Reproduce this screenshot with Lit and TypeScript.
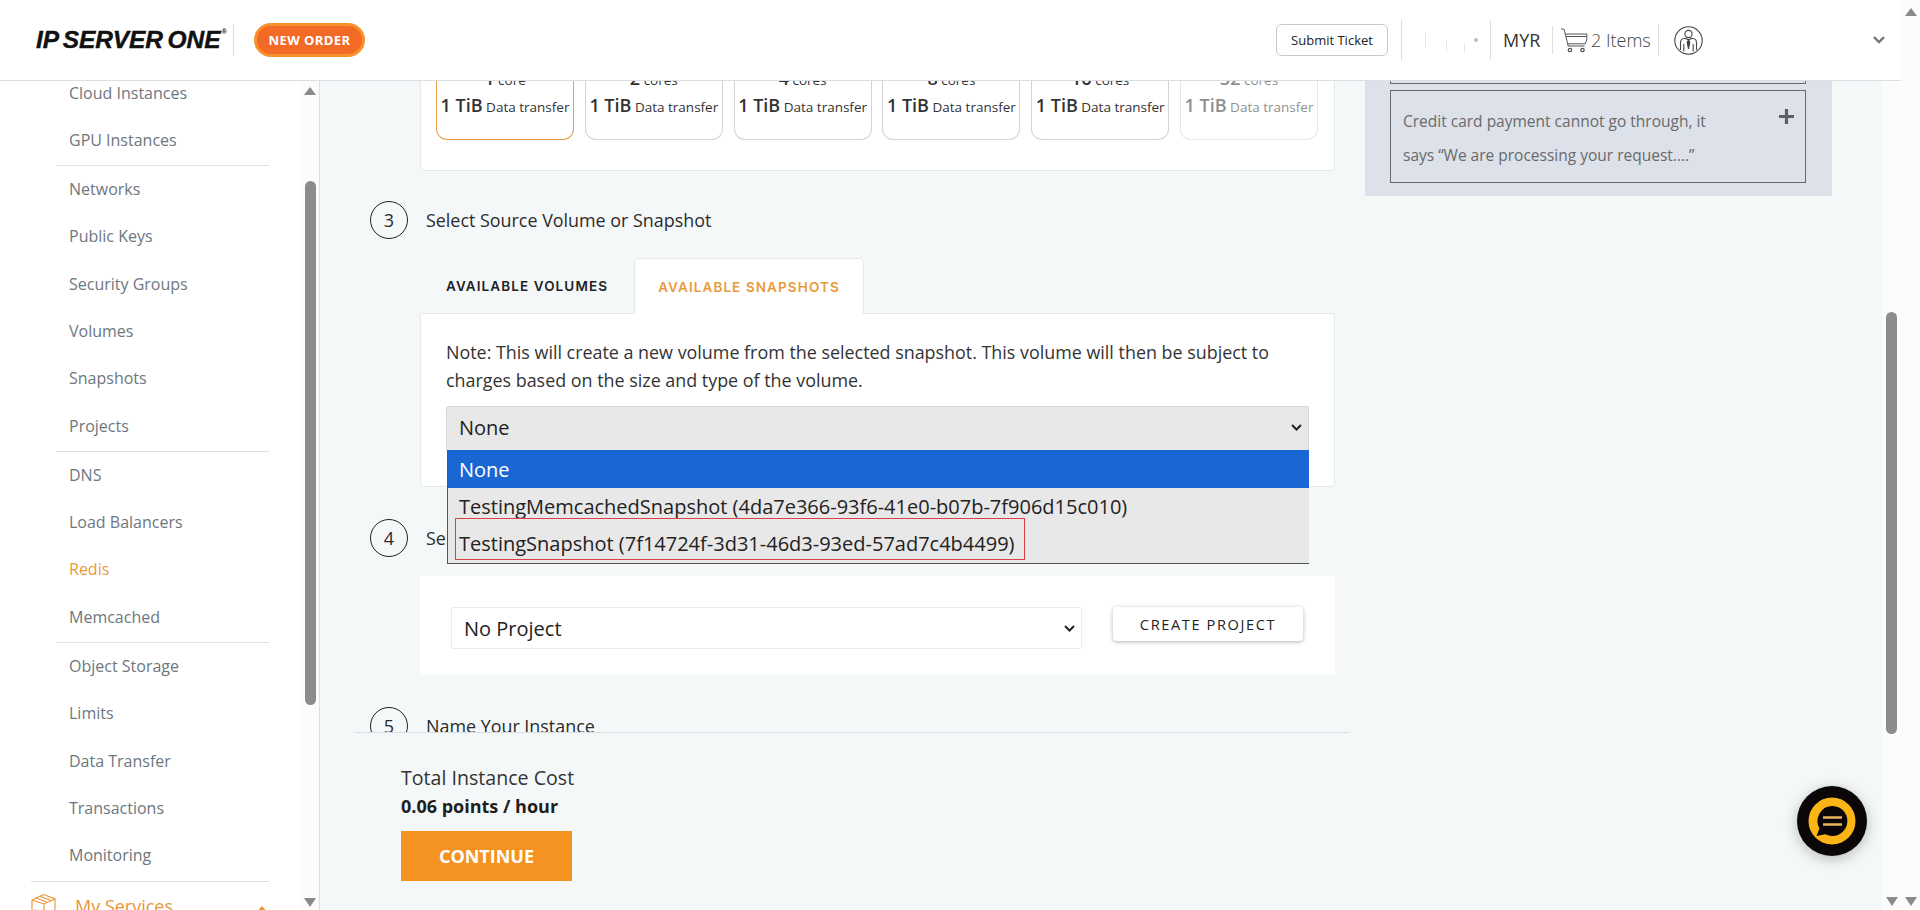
import { LitElement, html, css, svg } from "lit";
import { customElement } from "lit/decorators.js";

const groups = [
  ["Cloud Instances", "GPU Instances"],
  ["Networks", "Public Keys", "Security Groups", "Volumes", "Snapshots", "Projects"],
  ["DNS", "Load Balancers", "Redis", "Memcached"],
  ["Object Storage", "Limits", "Data Transfer", "Transactions", "Monitoring"],
];

const cores = [
  ["1", "core"],
  ["2", "cores"],
  ["4", "cores"],
  ["8", "cores"],
  ["16", "cores"],
  ["32", "cores"],
];

const chevron = svg`<svg class="chev" width="11" height="7" viewBox="0 0 11 7"><path d="M1 1l4.5 4.5L10 1" fill="none" stroke="#222" stroke-width="2"/></svg>`;

@customElement("app-root")
export class AppRoot extends LitElement {
  static styles = css`
    :host {
      display: flex;
      width: 1920px;
      height: 910px;
      overflow: hidden;
      font-family: "Open Sans", "Liberation Sans", sans-serif;
      color: #222;
      background: #fdfdfd;
      position: relative;
    }
    * { box-sizing: border-box; }
    .page { width: 1901px; display: flex; flex-direction: column; height: 910px; }
    .sb { display: flex; flex-direction: column; align-items: center; background: #fcfcfc; flex: none; }
    .outer { width: 19px; padding: 8px 0 4px; }
    .arrow-up { width: 0; height: 0; border-left: 6px solid transparent; border-right: 6px solid transparent; border-bottom: 8px solid #8a8a8a; }
    .arrow-down { width: 0; height: 0; border-left: 6px solid transparent; border-right: 6px solid transparent; border-top: 9px solid #8a8a8a; margin-top: auto; }
    .thumb { width: 11px; background: #8c8c8c; border-radius: 6px; }

    header { height: 81px; flex: none; background: #fff; border-bottom: 1px solid #dcdfe1; display: flex; align-items: center; position: relative; z-index: 5; }
    .logo { margin-left: 36px; width: 186px; font: italic 700 24.5px "Liberation Sans", sans-serif; color: #111; white-space: nowrap; letter-spacing: -0.1px; word-spacing: -2px; display: flex; line-height: 1; -webkit-text-stroke: 0.4px #111; }
    .logo sup { font-size: 7px; line-height: 1; -webkit-text-stroke: 0; margin-left: 1px; }
    .vsep { width: 1px; background: #dedede; flex: none; }
    .logo-sep { height: 32px; margin-left: 11px; }
    .order { margin-left: 20px; width: 111px; height: 34px; border-radius: 17px; background: #f26a25; border: 3px solid #f7902f; color: #fff; font-size: 13px; font-weight: 700; letter-spacing: 0.4px; display: flex; align-items: center; justify-content: center; }
    .ticket { margin-left: auto; width: 112px; height: 32px; border: 1px solid #c8c8c8; border-radius: 6px; font-size: 13px; display: flex; align-items: center; justify-content: center; color: #222; }
    .sep-a { height: 40px; margin-left: 13px; }
    .blur { width: 88px; height: 40px; display: flex; align-items: center; flex: none; }
    .blur i { display: block; background: #e6e6e6; flex: none; }
    .blur i:nth-child(1) { width: 1px; height: 14px; margin-left: 23px; }
    .blur i:nth-child(2) { width: 1px; height: 10px; margin-left: 20px; margin-top: 12px; }
    .blur i:nth-child(3) { width: 1px; height: 8px; margin-left: 17px; margin-top: 16px; }
    .blur i:nth-child(4) { width: 4px; height: 4px; margin-left: 9px; background: #b9bec6; border-radius: 50%; }
    .sep-z { height: 40px; }
    .myr { font-size: 18px; margin-left: 12px; width: 49px; font-weight: 400; color: #333; }
    .sep-b { height: 28px; }
    .cart { margin-left: 7px; flex: none; display: block; }
    .items { margin-left: 3px; font-size: 18px; font-weight: 300; color: #444; width: 67px; white-space: nowrap; }
    .sep-c { height: 32px; }
    .user { margin-left: 15px; flex: none; display: block; }
    .caret { margin-left: 170px; margin-right: 16px; flex: none; display: block; }

    .body { flex: 1; display: flex; min-height: 0; }
    aside { width: 320px; flex: none; border-right: 1px solid #dcdfe1; display: flex; background: #fff; }
    .nav { flex: 1; overflow: hidden; min-width: 0; }
    .navin { margin-top: -11.5px; }
    .group { margin-left: 56px; width: 213px; border-bottom: 1px solid #dee1e4; padding-bottom: 1px; }
    .group:nth-child(4) { border-bottom: none; }
    .row { height: 47.3px; line-height: 47.3px; padding-left: 13px; font-size: 16px; color: #6d7780; white-space: nowrap; }
    .row.on { color: #e89a3c; }
    .wide-line { margin-left: 31px; width: 238px; height: 1px; background: #dee1e4; }
    .services { display: flex; align-items: center; margin-left: 31px; height: 48px; width: 238px; color: #e8953a; font-size: 18px; }
    .services span { margin-left: 19px; }
    .services .up { margin-left: auto; margin-right: 2px; margin-top: 6px; width: 0; height: 0; border-left: 5px solid transparent; border-right: 5px solid transparent; border-bottom: 6px solid #e8953a; }
    .side-sb { width: 18px; padding: 6px 0 3px; }
    .side-sb .thumb { height: 524px; margin-top: 86px; }

    main { flex: 1; min-width: 0; background: #f5f8f9; display: flex; }
    .center { width: 1029px; padding-left: 35px; display: flex; flex-direction: column; flex: none; }
    .scroll { height: 651px; overflow: hidden; flex: none; padding-left: 65px; padding-right: 14px; }
    .card { background: #fff; border: 1px solid #e6e9ea; border-radius: 5px; }
    .core-card { margin-top: -23px; height: 113px; padding-left: 15px; display: flex; gap: 10.8px; }
    .core { width: 138px; height: 81px; border: 1px solid #d4d4d4; border-radius: 0 0 11px 11px; border-top: none; background: #fff; text-align: center; font-size: 13.5px; color: #333; padding-top: 10px; white-space: nowrap; flex: none; }
    .core.sel { border-color: #e9a04a; }
    .core.off { opacity: 0.55; }
    .core b { font-size: 18px; font-weight: 600; }
    .core div { height: 18px; line-height: 18px; }
    .core div + div { margin-top: 6px; height: 24px; line-height: 24px; }

    .step { display: flex; align-items: center; height: 38px; font-size: 17.9px; color: #2b2b2b; margin-left: -50px; }
    .num { width: 38px; height: 38px; border-radius: 50%; border: 1px solid #222; display: flex; align-items: center; justify-content: center; font-size: 18px; margin-right: 18px; flex: none; background: transparent; }
    .s3 { margin-top: 30px; }
    .s4, .s5 { margin-top: 32px; }

    .tabs { display: flex; height: 55px; margin-top: 19px; font-family: Inter, sans-serif; font-size: 13.5px; font-weight: 600; letter-spacing: 1.1px; position: relative; z-index: 1; white-space: nowrap; }
    .tab { display: flex; align-items: center; padding-top: 1px; }
    .tab1 { width: 214px; padding-left: 26px; color: #222; }
    .tab2 { width: 230px; height: 56px; justify-content: center; background: #fff; border: 1px solid #e6e9ea; border-bottom: none; border-radius: 5px 5px 0 0; color: #e89a3c; }
    .panel { height: 174px; padding: 24px 25px 0 25px; border-radius: 0 0 5px 5px; }
    .note { font-size: 17.9px; line-height: 28px; color: #333; }
    .sel-wrap { position: relative; margin-top: 12px; z-index: 3; }
    .select { height: 44px; background: #e8e8e8; border: 1px solid #d6d6d6; border-bottom: none; border-radius: 3px 3px 0 0; font-size: 20px; display: flex; align-items: center; padding: 0 0 2px 12px; color: #222; }
    .chev { margin-left: auto; margin-right: 6px; flex: none; display: block; }
    .popup { position: absolute; left: 1px; right: 0; top: 100%; height: 114px; background: #e8e8e8; border-left: 1px solid #555; border-bottom: 1px solid #555; font-size: 20px; color: #222; }
    .opt { height: 37px; padding-left: 11px; display: flex; align-items: center; white-space: nowrap; }
    .opt.active { height: 38px; background: #1a66d3; color: #fff; }
    .red { position: absolute; left: 7px; top: 68px; width: 570px; height: 42px; border: 1px solid #d8404a; }

    .proj { margin-top: 19px; height: 99px; padding: 30px 0 0 30px; display: flex; align-items: flex-start; gap: 31px; border-color: #fff; border-radius: 0; }
    .pselect { width: 631px; height: 42px; border: 1px solid #ececec; border-radius: 2px; background: #fff; font-size: 20px; display: flex; align-items: center; padding-left: 12px; }
    .create { width: 190px; height: 34px; border-radius: 4px; background: #fff; box-shadow: 0 1px 4px rgba(0, 0, 0, 0.3); font-size: 14.6px; letter-spacing: 1.6px; display: flex; align-items: center; justify-content: center; color: #222; }

    .foot { border-top: 1px solid #d9dee1; padding: 32px 0 0 46px; flex: 1; }
    .foot .t { font-size: 19.6px; font-weight: 400; line-height: 26px; color: #333; }
    .foot .p { font-size: 18px; font-weight: 700; line-height: 26px; margin-top: 2px; color: #1e1e1e; }
    .cont { margin-top: 12px; width: 171px; height: 50px; background: #f59322; color: #fff; font-weight: 700; font-size: 18px; display: flex; align-items: center; justify-content: center; }

    .right { width: 467px; margin-left: 16px; flex: none; align-self: flex-start; background: #dce1ea; padding: 0 26px 13px 25px; }
    .prev { height: 3px; border: 1px solid #666b73; border-top: none; }
    .box { margin-top: 6px; height: 93px; border: 1px solid #666b73; padding: 13px 0 0 12px; font-size: 15.5px; line-height: 34px; color: #6a6a6a; position: relative; display: flex; }
    .box p { margin: 0; width: 315px; }
    .plus { margin-left: auto; margin-right: 11px; margin-top: 5px; flex: none; display: block; }

    .main-sb { width: 19px; padding-bottom: 4px; }
    .main-sb .thumb { height: 422px; margin-top: 231px; }

    .fab { position: absolute; left: 1797px; top: 786px; width: 70px; height: 70px; border-radius: 50%; background: #0b0709; box-shadow: 0 3px 14px rgba(0, 0, 0, 0.25); display: flex; align-items: center; justify-content: center; z-index: 6; }
    .fab svg { display: block; }
  `;

  render() {
    return html`
      <div class="page">
        <header>
          <div class="logo">IP SERVER ONE<sup>®</sup></div>
          <div class="vsep logo-sep"></div>
          <div class="order">NEW ORDER</div>
          <div class="ticket">Submit Ticket</div>
          <div class="vsep sep-a"></div>
          <div class="blur"><i></i><i></i><i></i><i></i></div>
          <div class="vsep sep-z"></div>
          <div class="myr">MYR</div>
          <div class="vsep sep-b"></div>
          <svg class="cart" width="28" height="25" viewBox="0 0 28 25" fill="none" stroke="#555" stroke-width="1">
            <path d="M1 .8l3.2.7 4 16.5h16.3"/>
            <path d="M5.3 6h21.5v5.5l-1.4 4.3H7.7"/>
            <path d="M6 8.5h20.6"/>
            <circle cx="10" cy="22" r="1.7" stroke-width="1.3"/>
            <circle cx="22.5" cy="22" r="1.7" stroke-width="1.3"/>
          </svg>
          <div class="items">2 Items</div>
          <div class="vsep sep-c"></div>
          <svg class="user" width="29" height="29" viewBox="0 0 29 29" fill="none" stroke="#444" stroke-width="1.1">
            <circle cx="14.5" cy="14.5" r="13.7"/>
            <circle cx="14.5" cy="8" r="3.6"/>
            <path d="M6.5 24v-7.5c0-2.4 2-4.2 4.5-4.3l3.5 1.6 3.5-1.6c2.5.1 4.5 1.9 4.5 4.3V24"/>
            <path d="M9.8 18v7.5M19.2 18v7.5"/>
            <path d="M14.5 14l-1.3 2 1.3 7 1.3-7z" fill="#444"/>
          </svg>
          <svg class="caret" width="12" height="8" viewBox="0 0 12 8"><path d="M1 1.2l5 4.8 5-4.8" fill="none" stroke="#777" stroke-width="2.4"/></svg>
        </header>
        <div class="body">
          <aside>
            <div class="nav">
              <div class="navin">
                ${groups.map(
                  (g) => html`<div class="group">
                    ${g.map((r) => html`<div class="row ${r === "Redis" ? "on" : ""}">${r}</div>`)}
                  </div>`
                )}
                <div class="wide-line"></div>
                <div class="services">
                  <svg width="25" height="26" viewBox="0 0 25 26" fill="none" stroke="#e8953a" stroke-width="1.1">
                    <path d="M1 7l11.500-5.500L24 6v15l-11 4.500L1 21z"/>
                    <path d="M1 7l12 4 11-5M13 11v14.500"/>
                    <path d="M5 5l11.500 4.500M9 3.200l11.500 4.600M4 17v4l4 1.500v-4z"/>
                  </svg>
                  <span>My Services</span>
                  <div class="up"></div>
                </div>
              </div>
            </div>
            <div class="sb side-sb">
              <div class="arrow-up"></div>
              <div class="thumb"></div>
              <div class="arrow-down"></div>
            </div>
          </aside>
          <main>
            <div class="center">
              <div class="scroll">
                <div class="card core-card">
                  ${cores.map(
                    (c, i) => html`<div class="core ${i === 0 ? "sel" : ""} ${i === 5 ? "off" : ""}">
                      <div><b>${c[0]}</b> ${c[1]}</div>
                      <div><b>1 TiB</b> Data transfer</div>
                    </div>`
                  )}
                </div>
                <div class="step s3"><div class="num">3</div>Select Source Volume or Snapshot</div>
                <div class="tabs">
                  <div class="tab tab1">AVAILABLE VOLUMES</div>
                  <div class="tab tab2">AVAILABLE SNAPSHOTS</div>
                </div>
                <div class="card panel">
                  <div class="note">Note: This will create a new volume from the selected snapshot. This volume will then be subject to charges based on the size and type of the volume.</div>
                  <div class="sel-wrap">
                    <div class="select">None${chevron}</div>
                    <div class="popup">
                      <div class="opt active">None</div>
                      <div class="opt">TestingMemcachedSnapshot (4da7e366-93f6-41e0-b07b-7f906d15c010)</div>
                      <div class="opt">TestingSnapshot (7f14724f-3d31-46d3-93ed-57ad7c4b4499)</div>
                      <div class="red"></div>
                    </div>
                  </div>
                </div>
                <div class="step s4"><div class="num">4</div>Select Project</div>
                <div class="card proj">
                  <div class="pselect">No Project${chevron}</div>
                  <div class="create">CREATE PROJECT</div>
                </div>
                <div class="step s5"><div class="num">5</div>Name Your Instance</div>
              </div>
              <div class="foot">
                <div class="t">Total Instance Cost</div>
                <div class="p">0.06 points / hour</div>
                <div class="cont">CONTINUE</div>
              </div>
            </div>
            <div class="right">
              <div class="prev"></div>
              <div class="box">
                <p>Credit card payment cannot go through, it says “We are processing your request....”</p>
                <svg class="plus" width="15" height="15" viewBox="0 0 15 15"><path d="M7.500 0v15M0 7.500h15" stroke="#5f5f5f" stroke-width="3.2"/></svg>
              </div>
            </div>
          </main>
          <div class="sb main-sb">
            <div class="thumb"></div>
            <div class="arrow-down"></div>
          </div>
        </div>
      </div>
      <div class="sb outer">
        <div class="arrow-up"></div>
        <div class="arrow-down"></div>
      </div>
      <div class="fab">
        <svg width="48" height="48" viewBox="0 0 48 48">
          <circle cx="24" cy="24" r="23.500" fill="#fdb515"/>
          <path d="M24.500 9a15 15 0 1 1-7 28.300L8.500 39l3-7.500A15 15 0 0 1 24.500 9z" fill="#0b0709"/>
          <path d="M15 20.500h19M15 27.500h19" stroke="#e8b45e" stroke-width="2.400"/>
        </svg>
      </div>
    `;
  }
}
